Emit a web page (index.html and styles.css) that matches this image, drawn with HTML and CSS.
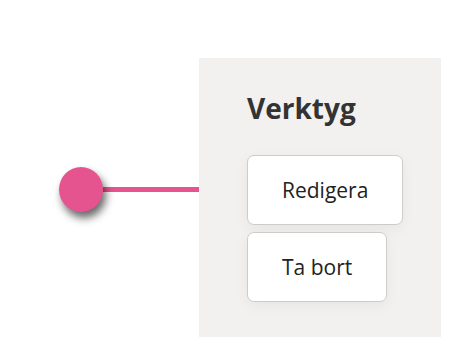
FILE: index.html
```html
<!DOCTYPE html>
<html lang="sv">
<head>
<meta charset="utf-8">
<link rel="stylesheet" href="styles.css">
</head>
<body>
<div class="stage">
  <div class="connector">
    <span class="dot"></span>
    <span class="wire"></span>
  </div>
  <section class="panel">
    <h2 class="title">Verktyg</h2>
    <div class="actions">
      <button class="btn">Redigera</button>
      <button class="btn">Ta bort</button>
    </div>
  </section>
</div>
</body>
</html>
```

FILE: styles.css
```css
* { box-sizing: border-box; }
html, body {
  margin: 0;
  background: #ffffff;
  font-family: "Open Sans", "Noto Sans", sans-serif;
}
.stage {
  display: flex;
  align-items: flex-start;
  padding: 58px 0 0 59px;
}
.connector {
  display: flex;
  align-items: center;
  margin-top: 109px;
  height: 45px;
}
.dot {
  position: relative;
  z-index: 1;
  width: 44px;
  height: 45px;
  border-radius: 50%;
  background: #e6548f;
  box-shadow: 3px 6px 9px rgba(0, 0, 0, 0.6);
}
.wire {
  width: 96px;
  height: 5px;
  background: #e6548f;
}
.panel {
  width: 242px;
  height: 279px;
  background: #f2f1f0;
  padding: 31px 0 0 48px;
}
.title {
  margin: 0;
  font-size: 28px;
  font-weight: 700;
  line-height: 38px;
  color: #333333;
}
.actions {
  display: flex;
  flex-direction: column;
  align-items: flex-start;
  gap: 7px;
  margin-top: 28px;
}
.btn {
  font-family: "Open Sans", "Noto Sans", sans-serif;
  font-size: 21px;
  line-height: 28px;
  color: #222222;
  background: #ffffff;
  border: 1px solid #cccccc;
  border-radius: 7px;
  padding: 20px 34px;
  box-shadow: 0 4px 14px rgba(0, 0, 0, 0.05);
  cursor: pointer;
}
```
